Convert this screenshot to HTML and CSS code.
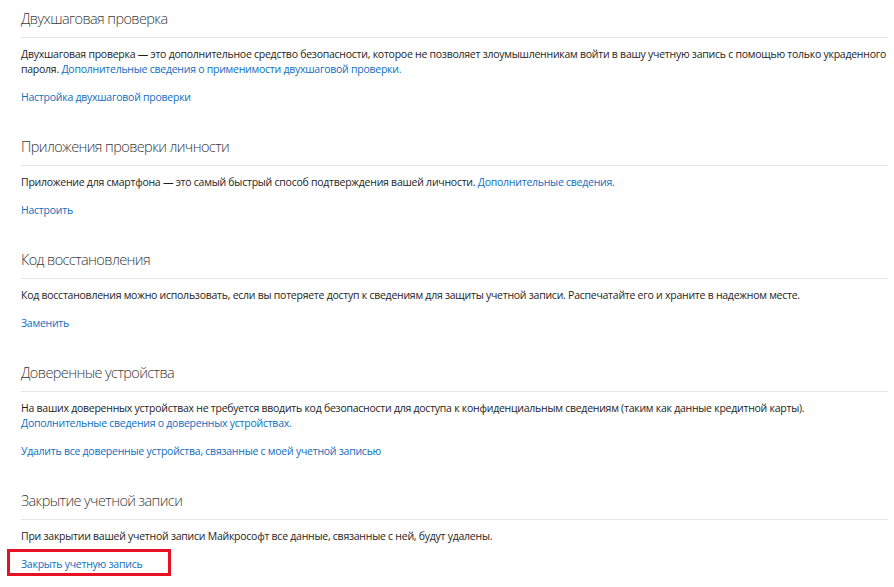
FILE: index.html
```html
<!DOCTYPE html>
<html lang="ru">
<head>
<meta charset="utf-8">
<link rel="stylesheet" href="styles.css">
</head>
<body>
<main class="page">
  <section class="sec">
    <h2 class="sec-title">Двухшаговая проверка</h2>
    <p class="sec-text">Двухшаговая проверка — это дополнительное средство безопасности, которое не позволяет злоумышленникам войти в вашу учетную запись с помощью только украденного пароля. <a class="link" href="#">Дополнительные сведения о применимости двухшаговой проверки.</a></p>
    <div class="sec-action"><a class="link" href="#">Настройка двухшаговой проверки</a></div>
  </section>
  <section class="sec">
    <h2 class="sec-title">Приложения проверки личности</h2>
    <p class="sec-text">Приложение для смартфона — это самый быстрый способ подтверждения вашей личности. <a class="link" href="#">Дополнительные сведения.</a></p>
    <div class="sec-action"><a class="link" href="#">Настроить</a></div>
  </section>
  <section class="sec">
    <h2 class="sec-title">Код восстановления</h2>
    <p class="sec-text">Код восстановления можно использовать, если вы потеряете доступ к сведениям для защиты учетной записи. Распечатайте его и храните в надежном месте.</p>
    <div class="sec-action"><a class="link" href="#">Заменить</a></div>
  </section>
  <section class="sec">
    <h2 class="sec-title">Доверенные устройства</h2>
    <p class="sec-text">На ваших доверенных устройствах не требуется вводить код безопасности для доступа к конфиденциальным сведениям (таким как данные кредитной карты). <a class="link link-block" href="#">Дополнительные сведения о доверенных устройствах.</a></p>
    <div class="sec-action"><a class="link" href="#">Удалить все доверенные устройства, связанные с моей учетной записью</a></div>
  </section>
  <section class="sec">
    <h2 class="sec-title">Закрытие учетной записи</h2>
    <p class="sec-text">При закрытии вашей учетной записи Майкрософт все данные, связанные с ней, будут удалены.</p>
    <div class="sec-action"><span class="highlight-wrap"><a class="link" href="#">Закрыть учетную запись</a><span class="highlight"></span></span></div>
  </section>
</main>
</body>
</html>
```
FILE: styles.css
```css
html, body {
  margin: 0;
  padding: 0;
  background: #ffffff;
  min-height: 100%;
}
body {
  font-family: "Open Sans", "Noto Sans", sans-serif;
  color: #1e1e1e;
}
.page {
  padding: 9px 6px 15px 21px;
  display: flex;
  flex-direction: column;
  gap: 32px;
}
.sec {
  display: flex;
  flex-direction: column;
}
.sec-title {
  margin: 0;
  font-size: 14.5px;
  font-weight: 300;
  letter-spacing: -0.6px;
  line-height: 20px;
  color: #3a3a3a;
  padding-bottom: 8px;
  border-bottom: 1px solid #e6e6e6;
}
.sec-text {
  margin: 9px 0 0;
  font-size: 10.5px;
  letter-spacing: -0.25px;
  line-height: 15px;
}
.sec-action {
  margin-top: 13px;
  font-size: 10.5px;
  letter-spacing: -0.25px;
  line-height: 15px;
}
.link {
  color: #106ebe;
  text-decoration: none;
}
.link-block {
  display: block;
}
.highlight-wrap {
  position: relative;
  display: inline-block;
}
.highlight {
  position: absolute;
  left: -14px;
  top: -8px;
  width: 164px;
  height: 27px;
  box-sizing: border-box;
  border: 3px solid #e81123;
}
```
